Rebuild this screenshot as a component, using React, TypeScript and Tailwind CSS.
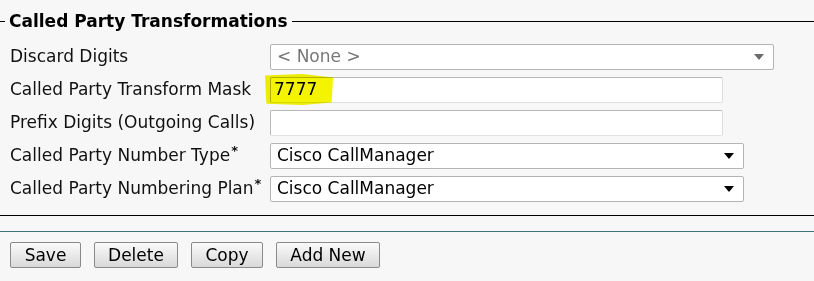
const font = "font-['DejaVu_Sans',Verdana,sans-serif]";

type Row = {
  label: string;
  required?: boolean;
  kind: "select" | "input";
  value?: string;
  width: string;
  muted?: boolean;
};

const rows: Row[] = [
  { label: "Discard Digits", kind: "select", value: "< None >", width: "w-[504px]", muted: true },
  { label: "Called Party Transform Mask", kind: "input", value: "7777", width: "w-[453px]" },
  { label: "Prefix Digits (Outgoing Calls)", kind: "input", width: "w-[453px]" },
  { label: "Called Party Number Type", required: true, kind: "select", value: "Cisco CallManager", width: "w-[474px]" },
  { label: "Called Party Numbering Plan", required: true, kind: "select", value: "Cisco CallManager", width: "w-[474px]" },
];

const Arrow = ({ muted }: { muted?: boolean }) => (
  <svg width="10" height="6" viewBox="0 0 10 6" className="shrink-0">
    <path d="M0 0H10L5 6Z" fill={muted ? "#6b6b6b" : "#000"} />
  </svg>
);

const Field = ({ row }: { row: Row }) => {
  if (row.kind === "select") {
    return (
      <div className={`${row.width} h-[26px] flex items-center justify-between bg-white border border-[#b4b4b4] rounded-[2px] pl-[6px] pr-[9px]`}>
        <span className={`text-[17px] ${row.muted ? "text-[#777]" : "text-black"}`}>{row.value}</span>
        <Arrow muted={row.muted} />
      </div>
    );
  }
  return (
    <div className="relative">
      <div className={`${row.width} h-[26px] flex items-center bg-white border border-[#b8b8b8] border-b-[#e2e2e6] border-r-[#dcdce0] rounded-[2px] pl-[3px]`}>
        <span className="text-[17px] text-black">{row.value}</span>
      </div>
      {row.value && (
        <div className="absolute left-[-5px] top-[-4px] w-[68px] h-[32px] bg-[#f4f400] mix-blend-multiply [clip-path:polygon(0%_8%,55%_3%,100%_14%,98%_92%,55%_100%,2%_96%)]" />
      )}
    </div>
  );
};

const Btn = ({ label, w }: { label: string; w: string }) => (
  <button className={`${w} h-[26px] border border-[#8a8a8a] rounded-[2px] bg-gradient-to-b from-[#fafafa] to-[#d9d9d9] text-[17px] leading-none text-black`}>
    {label}
  </button>
);

export default function App() {
  return (
    <div className={`${font} w-[814px] h-[281px] bg-[#f7f7f7] text-[#111] overflow-hidden`}>
      <div className="pt-[11px] border-b border-black">
        <div className="flex items-center">
          <div className="w-[5px] h-px bg-black" />
          <div className="px-[4px] text-[17px] font-bold leading-[21px] text-black">Called Party Transformations</div>
          <div className="flex-1 h-px bg-black" />
        </div>
        <div className="pt-[12px] pb-[13px] flex flex-col gap-[7px]">
          {rows.map((r) => (
            <div key={r.label} className="flex items-center h-[26px]">
              <div className="w-[270px] pl-[10px] text-[17px] text-[#111] whitespace-nowrap">
                {r.label}
                {r.required && <span className="relative top-[-6px] ml-[1px] text-[13px] font-bold">*</span>}
              </div>
              <Field row={r} />
            </div>
          ))}
        </div>
      </div>
      <div className="h-[15px]" />
      <div className="h-px bg-[#3d7272]" />
      <div className="flex gap-[13px] pl-[10px] pt-[10px]">
        <Btn label="Save" w="w-[71px]" />
        <Btn label="Delete" w="w-[84px]" />
        <Btn label="Copy" w="w-[72px]" />
        <Btn label="Add New" w="w-[104px]" />
      </div>
    </div>
  );
}
